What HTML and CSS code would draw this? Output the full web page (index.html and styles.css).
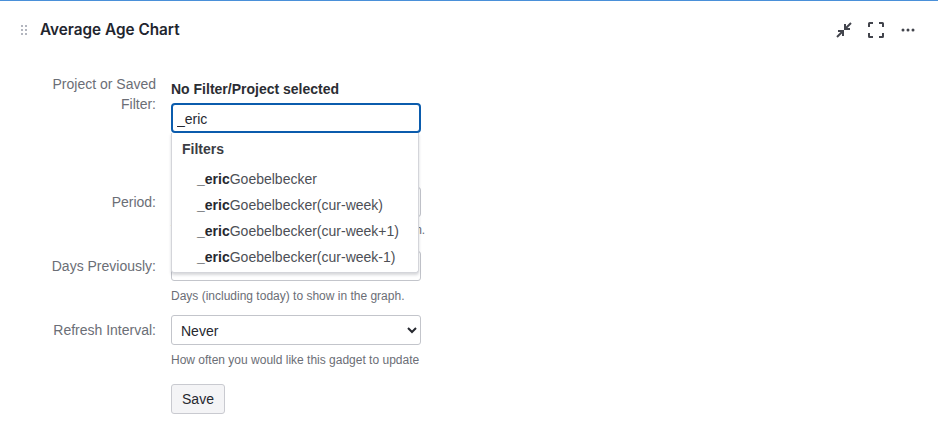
FILE: index.html
```html
<!DOCTYPE html>
<html lang="en">
<head>
<meta charset="utf-8">
<title>Average Age Chart</title>
<link rel="stylesheet" href="styles.css">
</head>
<body>
<header class="head">
  <svg class="grip" width="8" height="12" viewBox="0 0 8 12"><g fill="#b3b6bf"><rect x="1" y="1" width="2" height="2"/><rect x="5" y="1" width="2" height="2"/><rect x="1" y="5" width="2" height="2"/><rect x="5" y="5" width="2" height="2"/><rect x="1" y="9" width="2" height="2"/><rect x="5" y="9" width="2" height="2"/></g></svg>
  <h1 class="title">Average Age Chart</h1>
  <div class="tools">
    <svg class="tool" width="18" height="18" viewBox="0 0 18 18" fill="none" stroke="#42444c" stroke-width="2"><path d="M10.5 7.5 16 2"/><path d="M10 3v5h5"/><path d="M7.5 10.5 2 16"/><path d="M3 10h5v5"/></svg>
    <svg class="tool" width="18" height="18" viewBox="0 0 18 18" fill="none" stroke="#42444c" stroke-width="2"><path d="M6 2H2.500a.5.5 0 0 0-.5.5V6"/><path d="M12 2h3.500a.5.5 0 0 1 .5.5V6"/><path d="M2 12v3.500a.5.5 0 0 0 .5.5H6"/><path d="M16 12v3.500a.5.5 0 0 1-.5.5H12"/></svg>
    <svg class="tool" width="18" height="18" viewBox="0 0 18 18" fill="#42444c"><circle cx="4" cy="9" r="1.500"/><circle cx="9" cy="9" r="1.500"/><circle cx="14" cy="9" r="1.500"/></svg>
  </div>
</header>
<form class="form">
  <div class="row row-project">
    <label class="label">Project or Saved Filter:</label>
    <div class="field">
      <div class="selected">No Filter/Project selected</div>
      <div class="combo">
        <input class="input input-active" type="text" value="_eric">
        <div class="menu">
          <div class="menu-head">Filters</div>
          <div class="menu-item"><b>_eric</b>Goebelbecker</div>
          <div class="menu-item"><b>_eric</b>Goebelbecker(cur-week)</div>
          <div class="menu-item"><b>_eric</b>Goebelbecker(cur-week+1)</div>
          <div class="menu-item"><b>_eric</b>Goebelbecker(cur-week-1)</div>
        </div>
      </div>
    </div>
  </div>
  <div class="row row-period">
    <label class="label">Period:</label>
    <div class="field">
      <select class="input select"><option></option></select>
      <p class="help help-wide">The length of periods represented on the graph.</p>
    </div>
  </div>
  <div class="row row-days">
    <label class="label">Days Previously:</label>
    <div class="field">
      <input class="input" type="text">
      <p class="help">Days (including today) to show in the graph.</p>
    </div>
  </div>
  <div class="row row-refresh">
    <label class="label">Refresh Interval:</label>
    <div class="field">
      <select class="input select"><option>Never</option></select>
      <p class="help">How often you would like this gadget to update</p>
    </div>
  </div>
  <div class="row row-save">
    <span></span>
    <div class="field"><button class="save" type="button">Save</button></div>
  </div>
</form>
</body>
</html>
```

FILE: styles.css
```css
* { box-sizing: border-box; }

html, body { height: 100%; }

body {
  margin: 0;
  background: #fff;
  border-top: 1px solid #4a90d9;
  font-family: "Liberation Sans", Arial, sans-serif;
  font-size: 14px;
  color: #26282f;
  overflow: hidden;
}

.head {
  display: flex;
  align-items: center;
  height: 57px;
  padding: 0 21px 0 20px;
}

.grip { flex: none; margin-right: 12px; }

.title {
  margin: 0;
  font-family: Inter, "Liberation Sans", sans-serif;
  font-size: 15.3px;
  font-weight: 600;
  color: #22252e;
}

.tools { display: flex; gap: 14px; margin-left: auto; }

.form { display: flex; flex-direction: column; }

.row {
  display: grid;
  grid-template-columns: 110px 250px;
  column-gap: 15px;
  padding-left: 46px;
}

.label {
  text-align: right;
  line-height: 20px;
  color: #6b6e76;
}

.field { min-width: 0; }

.row-project { height: 129px; padding-top: 16px; }
.row-period { height: 64px; }
.row-days { height: 64px; }
.row-refresh { height: 69px; }

.row-period .label, .row-days .label, .row-refresh .label { padding-top: 5px; }

.selected {
  font-weight: 700;
  line-height: 20px;
  margin-top: 5px;
  margin-bottom: 4px;
  color: #2b2d33;
}

.combo { position: relative; }

.input {
  display: block;
  width: 250px;
  height: 30px;
  padding: 0 6px;
  border: 1px solid #c3c5cb;
  border-radius: 3px;
  background: #fff;
  font: 14px "Liberation Sans", Arial, sans-serif;
  color: #26282f;
  outline: none;
}

.input-active {
  border: 2px solid #0b5cad;
  border-radius: 4px;
  padding: 1px 4px 0;
}

.select { padding: 2px 0 0 5px; }

.menu {
  position: absolute;
  top: 30px;
  left: 0;
  width: 248px;
  height: 140px;
  padding-top: 6px;
  background: #fff;
  border: 1px solid #d4d5da;
  border-top: 0;
  border-radius: 0 0 3px 3px;
  box-shadow: 0 2px 3px rgba(30, 35, 50, .18);
  z-index: 2;
}

.menu-head {
  height: 20px;
  line-height: 20px;
  padding-left: 10px;
  font-weight: 700;
  color: #3b3d44;
  margin-bottom: 7px;
}

.menu-item {
  height: 26px;
  line-height: 26px;
  padding-left: 25px;
  color: #4d4f56;
  white-space: nowrap;
}

.menu-item b { color: #26282f; }

.help {
  margin: 7px 0 0;
  font-size: 12px;
  line-height: 16px;
  color: #6b6e76;
  white-space: nowrap;
}

.help-wide { margin-top: 5px; }

.save {
  width: 54px;
  height: 30px;
  padding: 0;
  border: 1px solid #c9cad0;
  border-radius: 3px;
  background: #f4f4f6;
  font: 14px "Liberation Sans", Arial, sans-serif;
  color: #26282f;
}
```
